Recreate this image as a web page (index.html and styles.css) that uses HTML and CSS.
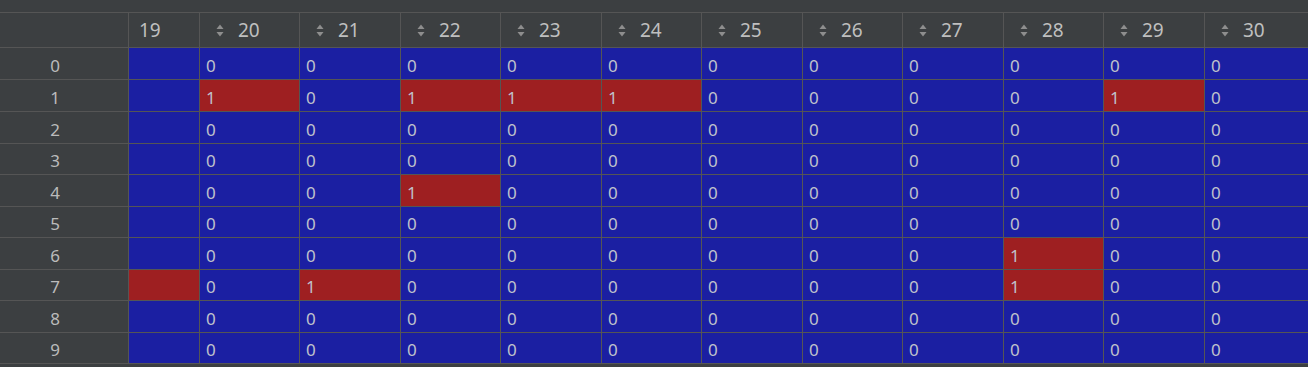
FILE: index.html
```html
<!DOCTYPE html>
<html>
<head>
<meta charset="utf-8">
<link rel="stylesheet" href="styles.css">
</head>
<body>
<div class="view">
  <div class="table">
    <div class="hd idx"></div>
    <div class="hd first">19</div>
    <div class="hd"><svg class="sort" viewBox="0 0 8 13"><path d="M4 0.5 L7.5 5 L0.5 5 Z"/><path d="M0.5 8 L7.5 8 L4 12.5 Z"/></svg>20</div>
    <div class="hd"><svg class="sort" viewBox="0 0 8 13"><path d="M4 0.5 L7.5 5 L0.5 5 Z"/><path d="M0.5 8 L7.5 8 L4 12.5 Z"/></svg>21</div>
    <div class="hd"><svg class="sort" viewBox="0 0 8 13"><path d="M4 0.5 L7.5 5 L0.5 5 Z"/><path d="M0.5 8 L7.5 8 L4 12.5 Z"/></svg>22</div>
    <div class="hd"><svg class="sort" viewBox="0 0 8 13"><path d="M4 0.5 L7.5 5 L0.5 5 Z"/><path d="M0.5 8 L7.5 8 L4 12.5 Z"/></svg>23</div>
    <div class="hd"><svg class="sort" viewBox="0 0 8 13"><path d="M4 0.5 L7.5 5 L0.5 5 Z"/><path d="M0.5 8 L7.5 8 L4 12.5 Z"/></svg>24</div>
    <div class="hd"><svg class="sort" viewBox="0 0 8 13"><path d="M4 0.5 L7.5 5 L0.5 5 Z"/><path d="M0.5 8 L7.5 8 L4 12.5 Z"/></svg>25</div>
    <div class="hd"><svg class="sort" viewBox="0 0 8 13"><path d="M4 0.5 L7.5 5 L0.5 5 Z"/><path d="M0.5 8 L7.5 8 L4 12.5 Z"/></svg>26</div>
    <div class="hd"><svg class="sort" viewBox="0 0 8 13"><path d="M4 0.5 L7.5 5 L0.5 5 Z"/><path d="M0.5 8 L7.5 8 L4 12.5 Z"/></svg>27</div>
    <div class="hd"><svg class="sort" viewBox="0 0 8 13"><path d="M4 0.5 L7.5 5 L0.5 5 Z"/><path d="M0.5 8 L7.5 8 L4 12.5 Z"/></svg>28</div>
    <div class="hd"><svg class="sort" viewBox="0 0 8 13"><path d="M4 0.5 L7.5 5 L0.5 5 Z"/><path d="M0.5 8 L7.5 8 L4 12.5 Z"/></svg>29</div>
    <div class="hd"><svg class="sort" viewBox="0 0 8 13"><path d="M4 0.5 L7.5 5 L0.5 5 Z"/><path d="M0.5 8 L7.5 8 L4 12.5 Z"/></svg>30</div>

    <div class="idx">0</div><div class="c b"></div>
    <div class="c b">0</div><div class="c b">0</div><div class="c b">0</div><div class="c b">0</div><div class="c b">0</div><div class="c b">0</div><div class="c b">0</div><div class="c b">0</div><div class="c b">0</div><div class="c b">0</div><div class="c b">0</div>

    <div class="idx">1</div><div class="c b"></div>
    <div class="c r">1</div><div class="c b">0</div><div class="c r">1</div><div class="c r">1</div><div class="c r">1</div><div class="c b">0</div><div class="c b">0</div><div class="c b">0</div><div class="c b">0</div><div class="c r">1</div><div class="c b">0</div>

    <div class="idx">2</div><div class="c b"></div>
    <div class="c b">0</div><div class="c b">0</div><div class="c b">0</div><div class="c b">0</div><div class="c b">0</div><div class="c b">0</div><div class="c b">0</div><div class="c b">0</div><div class="c b">0</div><div class="c b">0</div><div class="c b">0</div>

    <div class="idx">3</div><div class="c b"></div>
    <div class="c b">0</div><div class="c b">0</div><div class="c b">0</div><div class="c b">0</div><div class="c b">0</div><div class="c b">0</div><div class="c b">0</div><div class="c b">0</div><div class="c b">0</div><div class="c b">0</div><div class="c b">0</div>

    <div class="idx">4</div><div class="c b"></div>
    <div class="c b">0</div><div class="c b">0</div><div class="c r">1</div><div class="c b">0</div><div class="c b">0</div><div class="c b">0</div><div class="c b">0</div><div class="c b">0</div><div class="c b">0</div><div class="c b">0</div><div class="c b">0</div>

    <div class="idx">5</div><div class="c b"></div>
    <div class="c b">0</div><div class="c b">0</div><div class="c b">0</div><div class="c b">0</div><div class="c b">0</div><div class="c b">0</div><div class="c b">0</div><div class="c b">0</div><div class="c b">0</div><div class="c b">0</div><div class="c b">0</div>

    <div class="idx">6</div><div class="c b"></div>
    <div class="c b">0</div><div class="c b">0</div><div class="c b">0</div><div class="c b">0</div><div class="c b">0</div><div class="c b">0</div><div class="c b">0</div><div class="c b">0</div><div class="c r">1</div><div class="c b">0</div><div class="c b">0</div>

    <div class="idx">7</div><div class="c r"></div>
    <div class="c b">0</div><div class="c r">1</div><div class="c b">0</div><div class="c b">0</div><div class="c b">0</div><div class="c b">0</div><div class="c b">0</div><div class="c b">0</div><div class="c r">1</div><div class="c b">0</div><div class="c b">0</div>

    <div class="idx">8</div><div class="c b"></div>
    <div class="c b">0</div><div class="c b">0</div><div class="c b">0</div><div class="c b">0</div><div class="c b">0</div><div class="c b">0</div><div class="c b">0</div><div class="c b">0</div><div class="c b">0</div><div class="c b">0</div><div class="c b">0</div>

    <div class="idx">9</div><div class="c b"></div>
    <div class="c b">0</div><div class="c b">0</div><div class="c b">0</div><div class="c b">0</div><div class="c b">0</div><div class="c b">0</div><div class="c b">0</div><div class="c b">0</div><div class="c b">0</div><div class="c b">0</div><div class="c b">0</div>
  </div>
</div>
</body>
</html>
```

FILE: styles.css
```css
html, body {
  margin: 0;
  padding: 0;
  background: #3c3f41;
  width: 1308px;
  height: 367px;
  overflow: hidden;
}

.view {
  padding-top: 12px;
  font-family: "Noto Sans", "Open Sans", sans-serif;
  color: #bbbbbb;
}

.table {
  display: grid;
  grid-template-columns: 128px 70px 99px 100px 99px 100px 99px 100px 99px 100px 99px 100px 1fr;
  grid-template-rows: 34px 31px 31px 31px 30px 31px 30px 31px 30px 31px 30px;
  gap: 1px;
  padding: 1px 0;
  background: #555555;
}

.table > div {
  display: flex;
  align-items: center;
  min-width: 0;
  overflow: hidden;
  white-space: nowrap;
}

.hd {
  background: #3c3f41;
  font-size: 19px;
  padding-left: 16px;
  color: #bfbfbf;
}

.hd.first {
  padding-left: 10px;
}

.sort {
  width: 8px;
  height: 13px;
  fill: #8e8e8e;
  margin-right: 14px;
  flex: none;
}

.idx {
  background: #3c3f41;
  justify-content: center;
  padding-right: 18px;
  padding-top: 3px;
  font-size: 17px;
  box-sizing: border-box;
}

.hd.idx {
  padding: 0;
}

.c {
  font-size: 17px;
  padding-left: 6px;
  padding-top: 3px;
  color: #c0c2cc;
}

.b {
  background: #1b1fa2;
}

.r {
  background: #9e1f21;
}
```
